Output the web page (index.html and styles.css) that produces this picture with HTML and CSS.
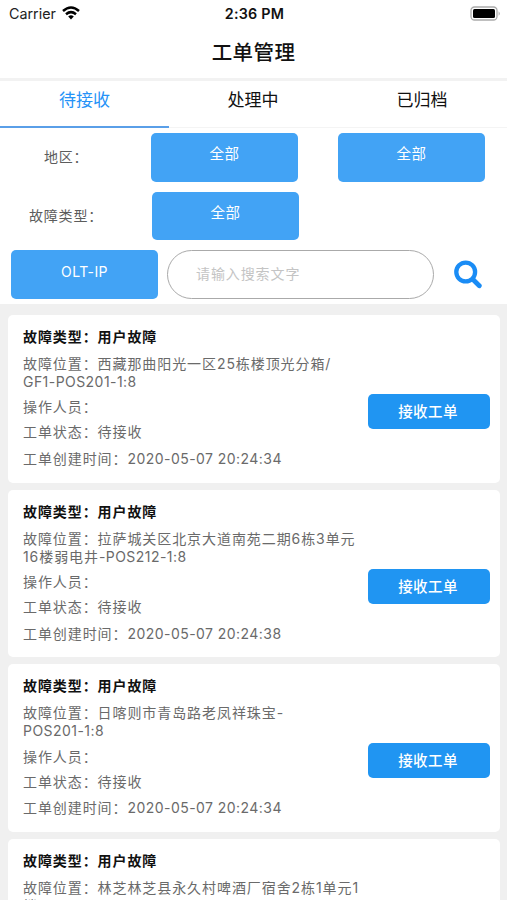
FILE: index.html
```html
<!DOCTYPE html>
<html lang="zh-CN">
<head>
<meta charset="utf-8">
<title>工单管理</title>
<link rel="stylesheet" href="styles.css">
</head>
<body>
<div class="app">
  <header class="status">
    <div class="carrier"><span>Carrier</span>
      <svg width="18" height="14" viewBox="0 0 18 14" fill="none" stroke="#000" stroke-width="2.5"><path d="M1 5Q9-2 17 5M4 8.2Q9 4 14 8.2"/><path d="M6.2 10.5Q9 8 11.8 10.5L9 13.5Z" fill="#000" stroke="none"/></svg>
    </div>
    <span class="time">2:36 PM</span>
    <svg class="battery" width="31" height="16" viewBox="0 0 31 16"><rect x="1" y="1" width="26" height="13" rx="3.5" fill="#fff" stroke="#aaa" stroke-width="1.3"/><rect x="3" y="3" width="22" height="9" rx="1.5"/><path d="M28.6 5.2Q31 7.5 28.6 9.8Z" fill="#aaa"/></svg>
  </header>
  <h1 class="title">工单管理</h1>
  <nav class="tabs"><a class="tab active">待接收</a><a class="tab">处理中</a><a class="tab">已归档</a></nav>
  <section class="filters">
    <div class="row area"><span class="label">地区：</span><button class="pick">全部</button><button class="pick">全部</button></div>
    <div class="row type"><span class="label">故障类型：</span><button class="pick">全部</button></div>
    <div class="row search"><button class="pick olt">OLT-IP</button><div class="field">请输入搜索文字</div>
      <svg width="29" height="29" viewBox="0 0 29 29" fill="none" stroke="#1a8cf5"><circle cx="11.7" cy="12" r="9.4" stroke-width="4.3"/><path d="M19 19.5L25.3 25.7" stroke-width="4.8" stroke-linecap="round"/></svg>
    </div>
  </section>
  <main class="list">
    <article class="card"><div class="info"><h2>故障类型：用户故障</h2><p class="place">故障位置：西藏那曲阳光一区25栋楼顶光分箱/<br><span class="num">GF1-POS201-1:8</span></p><p>操作人员：</p><p>工单状态：待接收</p><p class="created">工单创建时间：<span class="num">2020-05-07 20:24:34</span></p></div><button class="accept">接收工单</button></article>
    <article class="card"><div class="info"><h2>故障类型：用户故障</h2><p class="place">故障位置：拉萨城关区北京大道南苑二期6栋3单元<br>16楼弱电井<span class="num">-POS212-1:8</span></p><p>操作人员：</p><p>工单状态：待接收</p><p class="created">工单创建时间：<span class="num">2020-05-07 20:24:38</span></p></div><button class="accept">接收工单</button></article>
    <article class="card"><div class="info"><h2>故障类型：用户故障</h2><p class="place">故障位置：日喀则市青岛路老凤祥珠宝-<br><span class="num">POS201-1:8</span></p><p>操作人员：</p><p>工单状态：待接收</p><p class="created">工单创建时间：<span class="num">2020-05-07 20:24:34</span></p></div><button class="accept">接收工单</button></article>
    <article class="card"><div class="info"><h2>故障类型：用户故障</h2><p class="place">故障位置：林芝林芝县永久村啤酒厂宿舍2栋1单元1<br>楼</p></div></article>
  </main>
</div>
</body>
</html>
```
FILE: styles.css
```css
* { box-sizing: border-box; }
body { margin: 0; font-family: Inter, "Noto Sans CJK SC", sans-serif; background: #fff; }
button { border: 0; padding: 0; font-family: inherit; }
.app { height: 900px; overflow: hidden; display: flex; flex-direction: column; }
.status { flex: none; height: 27px; padding: 0 6px 0 9px; display: grid; grid-template-columns: 1fr auto 1fr; align-items: center; color: #222; }
.carrier { display: flex; align-items: center; gap: 6px; font-size: 14.3px; }
.carrier svg { margin-top: -1px; }
.time { margin-left: -1px; font-size: 14.3px; font-weight: 600; letter-spacing: .25px; color: #111; }
.battery { justify-self: end; }
.title { flex: none; height: 51px; margin: 0; text-align: center; font-size: 20.5px; letter-spacing: .4px; line-height: 51px; font-weight: 500; color: #111; }
.tabs { flex: none; height: 50px; display: grid; grid-template-columns: repeat(3, 1fr); border-top: 3px solid #f2f2f2; border-bottom: 1px solid #f4f4f4; }
.tab { height: 47px; padding-right: 1px; text-align: center; font-size: 17px; line-height: 38px; color: #111; }
.tab.active { padding: 0; color: #2492f7; border-bottom: 2px solid #5a9fe8; }
.filters { flex: none; height: 176px; padding-top: 5px; display: flex; flex-direction: column; gap: 10px; }
.row { display: flex; height: 48.7px; }
.label { font-size: 14px; letter-spacing: .8px; line-height: 47px; color: #5c5c5c; }
.area .label { width: 151px; padding-left: 44px; }
.area .pick + .pick { margin-left: 40px; }
.type .label { width: 152px; padding-left: 29px; }
.pick { width: 147px; height: 48.7px; padding-bottom: 10px; border-radius: 5px; background: #42a3f5; color: #fff; font-size: 14.5px; letter-spacing: .4px; }
.search { padding-left: 11px; align-items: center; }
.olt { padding-bottom: 6px; font-size: 14px; }
.field { width: 267px; height: 49px; margin: 0 20px 0 9px; padding-left: 28px; border: 1.5px solid #aaa; border-radius: 25px; font-size: 14px; letter-spacing: .9px; line-height: 45px; color: #c4c4c4; }
.list { flex: 1; min-height: 0; overflow: hidden; padding: 11px 7px 0 8px; background: #f0f0f0; display: flex; flex-direction: column; gap: 7px; }
.card { flex: none; height: 167.7px; padding: 13px 10px 0 15px; background: #fff; border-radius: 5px; display: flex; justify-content: space-between; }
.info { font-size: 14px; letter-spacing: .92px; color: #6a6a6a; white-space: nowrap; }
.num { letter-spacing: .45px; }
h2, p { margin: 0; font-size: inherit; line-height: 18px; }
h2 { font-weight: 700; color: #111; }
.place { margin-top: 9px; }
p + p { margin-top: 7.2px; }
p.created { margin-top: 8.5px; }
.accept { width: 122px; height: 35px; margin-top: 66px; padding: 0 2px 2px 0; border-radius: 5px; background: #2095f2; color: #fff; font-size: 14.5px; font-weight: 500; letter-spacing: .4px; }
```
